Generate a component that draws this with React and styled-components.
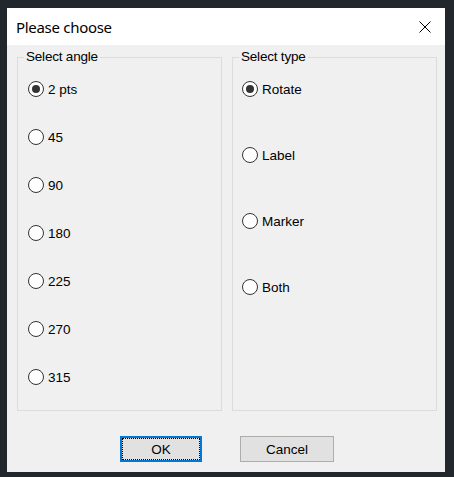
import styled, { createGlobalStyle } from "styled-components";
import { useState } from "react";

const GlobalStyle = createGlobalStyle`
  html, body {
    margin: 0;
    padding: 0;
    background: #22262d;
  }
  body {
    width: 454px;
    height: 477px;
    overflow: hidden;
  }
`;

const Screen = styled.div`
  padding: 8px 9px 5px 7px;
`;

const Dialog = styled.div`
  width: 438px;
  height: 464px;
  background: #f0f0f0;
  display: flex;
  flex-direction: column;
`;

const TitleBar = styled.div`
  height: 37px;
  background: #ffffff;
  display: flex;
  align-items: center;
  justify-content: space-between;
  padding: 0 14px 0 9px;
  box-sizing: border-box;
`;

const Title = styled.span`
  font-family: "Noto Sans", "Open Sans", sans-serif;
  font-size: 15px;
  letter-spacing: -0.3px;
  color: #000;
  margin-top: 1px;
`;

const CloseBtn = styled.button`
  border: 0;
  background: none;
  padding: 0;
  width: 12px;
  height: 12px;
  display: flex;
  cursor: pointer;
`;

const Body = styled.div`
  padding: 4px 8px 0 10px;
  display: flex;
  flex-direction: column;
`;

const Groups = styled.div`
  display: flex;
  gap: 10px;
`;

const Group = styled.fieldset`
  margin: 0;
  padding: 0;
  min-width: 0;
  width: 205px;
  height: 362px;
  box-sizing: border-box;
  border: 1px solid #dcdcdc;
  legend {
    font-family: "Liberation Sans", Arial, sans-serif;
    font-size: 13.5px;
    line-height: 16px;
    letter-spacing: -0.2px;
    color: #000;
    padding: 0 2px;
    margin-left: 6px;
  }
`;

const Options = styled.div`
  display: flex;
  flex-direction: column;
  gap: ${(p) => p.$gap}px;
  padding: 16px 0 0 ${(p) => p.$indent}px;
`;

const Option = styled.label`
  display: flex;
  align-items: center;
  gap: 4px;
  height: 16px;
  font-family: "Liberation Sans", Arial, sans-serif;
  font-size: 13.5px;
  color: #000;
  cursor: pointer;
`;

const Dot = styled.span`
  flex: none;
  width: 16px;
  height: 16px;
  box-sizing: border-box;
  border: 1px solid #333;
  border-radius: 50%;
  background: #fff;
  display: flex;
  align-items: center;
  justify-content: center;
  &::after {
    content: "";
    width: 8px;
    height: 8px;
    border-radius: 50%;
    background: ${(p) => (p.$on ? "#333" : "transparent")};
  }
`;

const Buttons = styled.div`
  display: flex;
  justify-content: center;
  gap: 38px;
  margin-top: 25px;
`;

const Button = styled.button`
  width: ${(p) => p.$w}px;
  height: 26px;
  box-sizing: border-box;
  background: #e1e1e1;
  border: ${(p) => (p.$primary ? "2px solid #0078d7" : "1px solid #adadad")};
  font-family: "Liberation Sans", Arial, sans-serif;
  font-size: 13.5px;
  color: #000;
  padding: 0;
  cursor: pointer;
  ${(p) =>
    p.$primary &&
    `
    outline: 1px dotted #000;
    outline-offset: -3px;
  `}
`;

const angles = ["2 pts", "45", "90", "180", "225", "270", "315"];
const types = ["Rotate", "Label", "Marker", "Both"];

function RadioList({ items, value, onPick, gap, indent }) {
  return (
    <Options $gap={gap} $indent={indent}>
      {items.map((it) => (
        <Option key={it} onClick={() => onPick(it)}>
          <Dot $on={value === it} />
          {it}
        </Option>
      ))}
    </Options>
  );
}

export default function App() {
  const [angle, setAngle] = useState("2 pts");
  const [type, setType] = useState("Rotate");

  return (
    <>
      <GlobalStyle />
      <Screen>
        <Dialog>
          <TitleBar>
            <Title>Please choose</Title>
            <CloseBtn aria-label="Close">
              <svg width="12" height="12" viewBox="0 0 12 12">
                <path d="M0.5 0.5 L11.5 11.5 M11.5 0.5 L0.5 11.5" stroke="#000" strokeWidth="1" />
              </svg>
            </CloseBtn>
          </TitleBar>
          <Body>
            <Groups>
              <Group>
                <legend>Select angle</legend>
                <RadioList items={angles} value={angle} onPick={setAngle} gap={32} indent={10} />
              </Group>
              <Group>
                <legend>Select type</legend>
                <RadioList items={types} value={type} onPick={setType} gap={50} indent={9} />
              </Group>
            </Groups>
            <Buttons>
              <Button $primary $w={82}>OK</Button>
              <Button $w={94}>Cancel</Button>
            </Buttons>
          </Body>
        </Dialog>
      </Screen>
    </>
  );
}
